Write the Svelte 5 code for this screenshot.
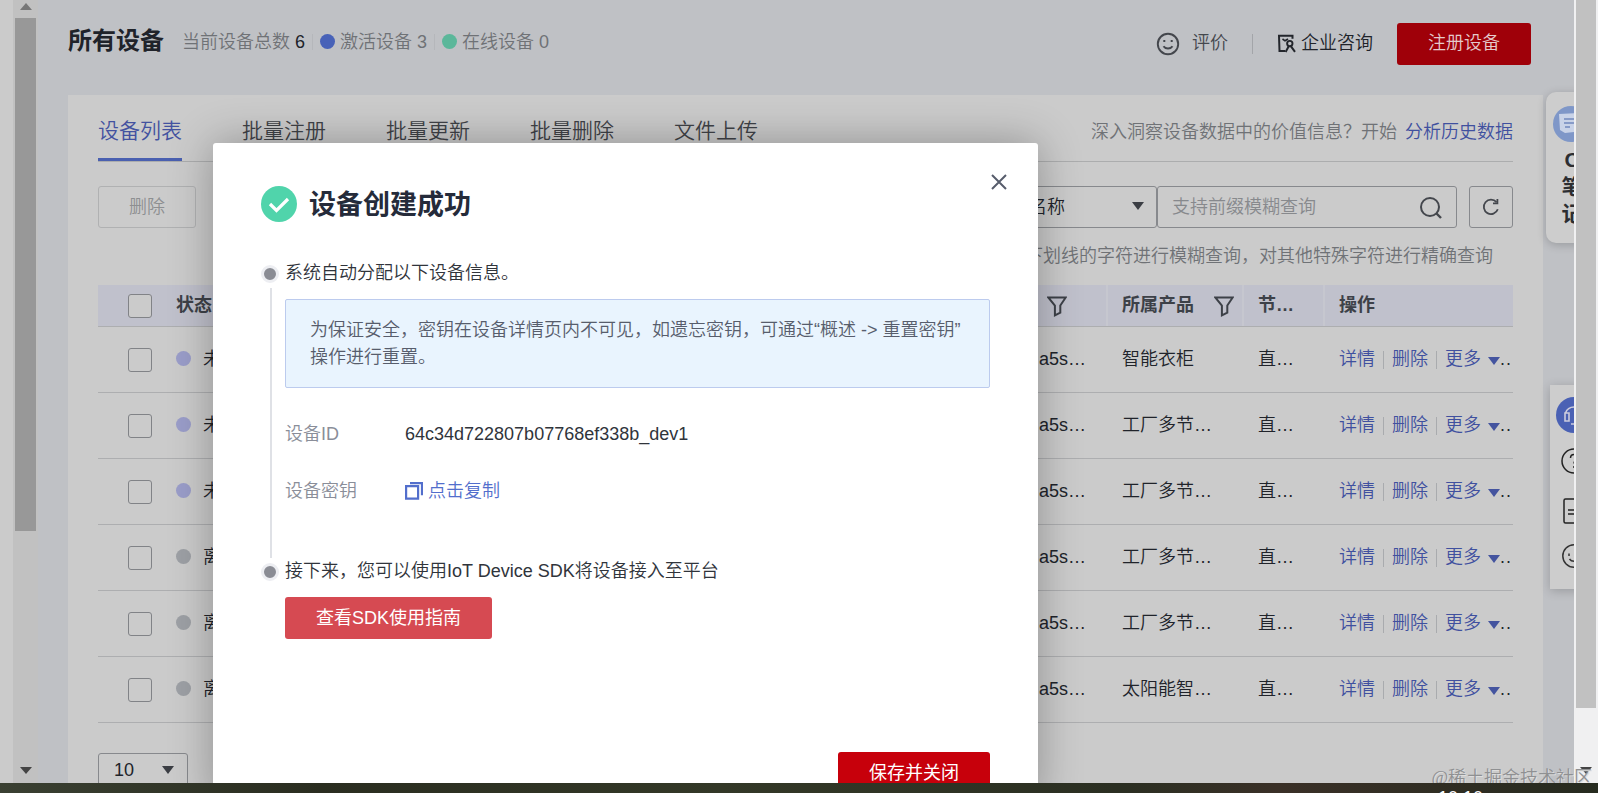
<script lang="ts">
	interface Device {
		status: string;
		tone: 'idle' | 'offline';
		node: string;
		product: string;
		kind: string;
	}

	const tabs = ['设备列表', '批量注册', '批量更新', '批量删除', '文件上传'];

	const devices: Device[] = [
		{ status: '未激活', tone: 'idle', node: 'a5s…', product: '智能衣柜', kind: '直…' },
		{ status: '未激活', tone: 'idle', node: 'a5s…', product: '工厂多节…', kind: '直…' },
		{ status: '未激活', tone: 'idle', node: 'a5s…', product: '工厂多节…', kind: '直…' },
		{ status: '离线', tone: 'offline', node: 'a5s…', product: '工厂多节…', kind: '直…' },
		{ status: '离线', tone: 'offline', node: 'a5s…', product: '工厂多节…', kind: '直…' },
		{ status: '离线', tone: 'offline', node: 'a5s…', product: '太阳能智…', kind: '直…' }
	];

	let activeTab = $state(tabs[0]);
</script>

{#snippet funnel()}
	<svg class="funnel" width="20" height="21" viewBox="0 0 20 21">
		<path d="M1.3 1.5h17.4l-5.4 8v7.2l-5.4 2.6V9.5z" />
	</svg>
{/snippet}

{#snippet caret()}
	<svg class="caret" width="12" height="8" viewBox="0 0 12 8"><path d="M0 0h12L6 8z" /></svg>
{/snippet}

<div class="screen">
	<div class="gutter"></div>
	<div class="scroll-left">
		<svg width="12" height="7" viewBox="0 0 12 7"><path d="M0 7h12L6 0z" fill="#777" /></svg>
		<div class="thumb"></div>
		<svg class="down" width="12" height="7" viewBox="0 0 12 7"><path d="M0 0h12L6 7z" fill="#444" /></svg>
	</div>

	<div class="page">
		<header>
			<h1>所有设备</h1>
			<div class="counts">
				<span>当前设备总数 <b>6</b></span>
				<i class="sep"></i>
				<span class="dot blue"></span>
				<span>激活设备 3</span>
				<i class="sep"></i>
				<span class="dot green"></span>
				<span>在线设备 0</span>
			</div>
			<div class="actions">
				<svg width="24" height="24" viewBox="0 0 24 24" fill="none" stroke="#44474d" stroke-width="1.9">
					<circle cx="12" cy="12" r="10.2" />
					<path d="M7.5 14.2c1.8 3 7.2 3 9 0" />
					<path d="M8.300 8v2M15.700 8v2" stroke-width="2" />
				</svg>
				<span class="rate">评价</span>
				<i class="rule"></i>
				<svg width="19" height="19" viewBox="0 0 19 19" fill="none" stroke="#23262c" stroke-width="2">
					<path d="M8 17H2.500L2 1.800h13.500v3" />
					<path d="M5.500 5l2.500 1.800L11 5" stroke-width="1.600" />
					<circle cx="12.800" cy="9.600" r="2.700" stroke-width="1.900" />
					<path d="M8.600 18l3-5.500M14 12.300l4 5.500" />
				</svg>
				<span class="consult">企业咨询</span>
				<button class="register">注册设备</button>
			</div>
		</header>

		<main>
			<nav>
				{#each tabs as tab}
					<button class="tab" class:active={activeTab === tab} onclick={() => (activeTab = tab)}>{tab}</button>
				{/each}
				<p>深入洞察设备数据中的价值信息？开始<a href="#history">分析历史数据</a></p>
			</nav>

			<div class="toolbar">
				<button class="delete">删除</button>
				<div class="select"><span>设备名称</span>{@render caret()}</div>
				<div class="search">
					<span>支持前缀模糊查询</span>
					<svg width="24" height="24" viewBox="0 0 24 24" fill="none" stroke="#44474d" stroke-width="2">
						<circle cx="11" cy="12" r="9" />
						<path d="M17.5 18.500l4.5 4.5" stroke-width="2.4" />
					</svg>
				</div>
				<button class="refresh" aria-label="刷新">
					<svg width="18" height="18" viewBox="0 0 18 18" fill="none" stroke="#44474d" stroke-width="1.8">
						<path d="M15.800 11.3A7.2 7.2 0 1 1 14.500 4.200" />
						<path d="M15.400 1v4.400h-4.400" />
					</svg>
				</button>
			</div>
			<p class="hint">下划线的字符进行模糊查询，对其他特殊字符进行精确查询</p>

			<div class="row head">
				<span class="box"></span>
				<span class="status">状态</span>
				<span class="node">{@render funnel()}</span>
				<span class="product">所属产品{@render funnel()}</span>
				<span class="kind">节…</span>
				<span class="ops">操作</span>
			</div>
			{#each devices as device}
				<div class="row">
					<span class="box"></span>
					<span class="status"><span class="dot {device.tone}"></span>{device.status}</span>
					<span class="node">{device.node}</span>
					<span class="product">{device.product}</span>
					<span class="kind">{device.kind}</span>
					<span class="ops">
						<a href="#detail">详情</a><i></i><a href="#delete">删除</a><i></i><a href="#more">更多</a>
						{@render caret()}<em>..</em>
					</span>
				</div>
			{/each}

			<div class="pager"><span>10</span>{@render caret()}</div>
		</main>

		<aside class="notes">
			<svg width="36" height="36" viewBox="0 0 36 36">
				<circle cx="18" cy="18" r="18" fill="#7f97c8" />
				<path d="M6 8l20-1 2 18-16 2-5-3z" fill="#c9d3e8" />
				<path d="M11 13h10M11 17h10M12 21h5" stroke="#7189bd" stroke-width="1.6" />
			</svg>
			<span>C</span><span>笔</span><span>记</span>
		</aside>

		<aside class="service">
			<svg width="36" height="36" viewBox="0 0 36 36" fill="none" stroke="#ccd" stroke-width="1.6">
				<circle cx="18" cy="18" r="18" fill="#4a61b4" stroke="none" />
				<path d="M9.500 16a9 9 0 0 1 17 0M9 16h4v8H9zM27 16h-4v8h4M15 27h6" />
			</svg>
			<svg width="26" height="26" viewBox="0 0 26 26" fill="none" stroke="#222" stroke-width="1.5">
				<circle cx="13" cy="13" r="12" />
				<path d="M9.500 10c0-5 7-4.500 7-.5 0 3-3.500 2.500-3.500 6M13 18v2" />
			</svg>
			<svg width="22" height="26" viewBox="0 0 22 26" fill="none" stroke="#222" stroke-width="1.5">
				<rect x="1" y="1" width="20" height="24" rx="1.500" />
				<path d="M5 12h10M5 16h10" />
			</svg>
			<svg width="26" height="24" viewBox="0 0 26 24" fill="none" stroke="#333" stroke-width="1.500">
				<circle cx="13" cy="12" r="11.200" />
				<path d="M8.500 15c2 3 7 3 9 0M8 9.500v2.500M18 9.500v2.500" />
			</svg>
		</aside>
	</div>

	<div class="scroll-right">
		<div class="thumb"></div>
		<svg width="12" height="7" viewBox="0 0 12 7"><path d="M0 0h12L6 7z" fill="#444" /></svg>
	</div>
	<div class="taskbar"><span>10:10</span></div>

	<div class="modal" role="dialog">
		<div class="title">
			<svg width="36" height="36" viewBox="0 0 36 36">
				<circle cx="18" cy="18" r="18" fill="#50d4ab" />
				<path d="M9 18l6.500 6.500L27 13" fill="none" stroke="#fff" stroke-width="3.200" />
			</svg>
			<h2>设备创建成功</h2>
			<svg class="close" width="16" height="16" viewBox="0 0 16 16">
				<path d="M1 1l14 14M15 1L1 15" stroke="#575d6c" stroke-width="2" />
			</svg>
		</div>

		<div class="steps">
			<div class="track">
				<span class="bullet"></span>
				<span class="line"></span>
				<span class="bullet"></span>
			</div>
			<div class="body">
				<p>系统自动分配以下设备信息。</p>
				<div class="tip">为保证安全，密钥在设备详情页内不可见，如遗忘密钥，可通过“概述 -&gt; 重置密钥”<br />操作进行重置。</div>
				<dl>
					<dt>设备ID</dt>
					<dd>64c34d722807b07768ef338b_dev1</dd>
					<dt>设备密钥</dt>
					<dd class="copy">
						<svg width="18" height="18" viewBox="0 0 18 18" fill="none" stroke="#526ecc" stroke-width="2.200">
							<path d="M1.100 4.100h12v12.500h-12z" />
							<path d="M5 1.200h12v12" stroke-width="2.200" />
						</svg>
						点击复制
					</dd>
				</dl>
				<p>接下来，您可以使用IoT Device SDK将设备接入至平台</p>
				<button class="guide">查看SDK使用指南</button>
			</div>
		</div>
		<button class="save">保存并关闭</button>
	</div>

	<div class="watermark">@稀土掘金技术社区</div>
</div>

<style>
	:global(body) {
		margin: 0;
		overflow: hidden;
	}

	.screen {
		position: relative;
		display: grid;
		grid-template: 783px 10px / 13px 25px 1536px 24px;
		width: 1598px;
		height: 793px;
		overflow: hidden;
		background: #cbcbcb;
		color: #20232a;
		font: 18px/27px 'Liberation Sans', 'Noto Sans CJK SC', sans-serif;
		font-weight: 350;
	}

	.screen * {
		box-sizing: border-box;
	}

	h1,
	h2,
	p,
	dl,
	dd {
		margin: 0;
	}

	button {
		padding: 0;
		border: 0;
		background: none;
		font: inherit;
		color: inherit;
	}

	svg {
		flex: none;
		display: block;
	}

	a {
		color: #40509f;
		text-decoration: none;
	}

	.scroll-left {
		display: flex;
		flex-direction: column;
		align-items: center;
		padding: 3px 0 9px;
		background: #c1c1c1;
	}

	.scroll-left .thumb {
		width: 21px;
		height: 513px;
		margin-top: 8px;
		background: #989898;
	}

	.scroll-left .down {
		margin-top: auto;
	}

	.page {
		position: relative;
		overflow: hidden;
		background: #bfc1c5;
	}

	header {
		display: flex;
		align-items: center;
		height: 95px;
		padding: 0 43px 12px 30px;
	}

	h1 {
		margin-top: -2px;
		font-size: 24px;
		font-weight: 700;
	}

	.counts {
		display: flex;
		align-items: center;
		margin: 1px 0 0 18px;
		color: #6f7276;
	}

	.counts b {
		color: #20232a;
		font-weight: 400;
	}

	.sep {
		width: 1px;
		height: 16px;
		margin: 0 7px;
		background: #b5b7bb;
	}

	.dot {
		width: 15px;
		height: 15px;
		border-radius: 50%;
	}

	.counts .dot {
		margin-top: -1px;
		margin-right: 5px;
	}

	.blue {
		background: #4862b8;
	}

	.green {
		background: #5bb79a;
	}

	.idle {
		background: #9a9dc9;
	}

	.offline {
		background: #9da0a5;
	}

	.actions {
		display: flex;
		align-items: center;
		margin-left: auto;
		padding-top: 4px;
	}

	.rate {
		margin-left: 12px;
		color: #44474d;
	}

	.rule {
		width: 1px;
		height: 20px;
		margin: 0 24px;
		background: #a3a5a9;
	}

	.consult {
		margin-left: 5px;
	}

	.register {
		width: 134px;
		height: 42px;
		margin-left: 24px;
		border-radius: 3px;
		background: #9f0009;
		color: #e5c9cb;
	}

	main {
		width: 1475px;
		height: 700px;
		margin-left: 30px;
		padding: 0 30px;
		background: #cbcbcb;
	}

	nav {
		display: flex;
		align-items: stretch;
		gap: 60px;
		height: 67px;
		border-bottom: 1px solid #acadae;
	}

	.tab {
		height: 66px;
		padding-top: 8px;
		border-bottom: 3px solid transparent;
		font-size: 21px;
		color: #3f4247;
	}

	.tab.active {
		border-color: #4a60b0;
		color: #4352a0;
	}

	nav p {
		margin-left: auto;
		padding-top: 24px;
		color: #6f7276;
	}

	nav a {
		margin-left: 8px;
	}

	.toolbar {
		display: flex;
		height: 42px;
		margin-top: 24px;
	}

	.delete {
		width: 98px;
		border: 1px solid #b0b1b2;
		border-radius: 3px;
		color: #8d8f91;
	}

	.select,
	.search,
	.refresh,
	.pager {
		display: flex;
		align-items: center;
		justify-content: space-between;
		border: 1px solid #87898d;
		border-radius: 3px;
	}

	.select {
		width: 180px;
		margin-left: auto;
		padding: 0 12px 0 14px;
	}

	.select .caret {
		margin-top: -2px;
	}

	.select span {
		margin-left: 1px;
	}

	.caret {
		fill: #3b3e44;
	}

	.search {
		width: 300px;
		padding: 0 13px 0 14px;
		color: #87898d;
	}

	.refresh {
		justify-content: center;
		width: 44px;
		margin-left: 12px;
	}

	.hint {
		margin: 15px 20px 15px 0;
		text-align: right;
		color: #6f7276;
	}

	/* device table */
	.row {
		display: grid;
		grid-template-columns: 24px 24px 863px 84px 135px 81px 173px;
		align-items: center;
		height: 66px;
		padding-left: 30px;
		border-bottom: 1px solid #adaeb0;
	}

	.row .box {
		width: 24px;
		height: 24px;
		margin-top: 1px;
		border: 1px solid #818387;
		border-radius: 3px;
	}

	.row:not(.head) .product {
		margin-left: -1px;
	}

	.status {
		grid-column: 3;
		display: flex;
		align-items: center;
		gap: 12px;
	}

	.status .dot {
		margin-top: -3px;
	}

	.ops {
		display: flex;
		align-items: center;
	}

	.ops i {
		width: 1px;
		height: 18px;
		margin: 0 8px;
		background: #a9abae;
	}

	.ops .caret {
		margin: 3px 0 0 7px;
		fill: #44549f;
	}

	.ops em {
		font-style: normal;
		letter-spacing: 1px;
	}

	.head {
		height: 42px;
		background: #c0c1cc;
		color: #3d4148;
		font-weight: 700;
	}

	.head .box {
		margin-top: 0;
		background: #cbcbcb;
	}

	.head .node,
	.head .product {
		display: flex;
		align-items: center;
	}

	.head .node {
		padding: 2px 0 0 8px;
	}

	.head .product .funnel {
		margin: 2px 0 0 20px;
	}

	.head .product,
	.head .kind,
	.head .ops {
		height: 41px;
		margin-left: -16px;
		padding-left: 16px;
		line-height: 41px;
		box-shadow: inset 2px 0 #c6c7cf;
	}

	.head .product {
		margin-left: -17px;
	}

	.funnel {
		fill: none;
		stroke: #3d4148;
		stroke-width: 2;
	}

	.pager {
		width: 90px;
		height: 42px;
		margin-top: 30px;
		padding: 0 13px 8px 15px;
	}

	/* floating widgets cut off by the page's right edge */
	aside {
		position: absolute;
		background: #cdcdcd;
		box-shadow: 0 2px 10px rgba(0, 0, 0, 0.2);
	}

	.notes {
		left: 1508px;
		top: 92px;
		display: flex;
		flex-direction: column;
		align-items: center;
		width: 52px;
		height: 151px;
		padding-top: 14px;
		border-radius: 10px;
		color: #2c2e32;
		font-size: 21px;
		font-weight: 700;
	}

	.notes svg {
		margin: 0 2px 4px 0;
	}

	.service {
		left: 1512px;
		top: 385px;
		display: flex;
		flex-direction: column;
		align-items: center;
		width: 48px;
		height: 204px;
		padding-top: 12px;
	}

	.service svg + svg {
		margin-top: 15px;
	}

	.service svg:nth-child(3) {
		margin-top: 24px;
	}

	.service svg:nth-child(4) {
		margin-top: 20px;
	}

	.scroll-right {
		display: flex;
		flex-direction: column;
		justify-content: space-between;
		padding: 0 2px 9px;
		background: #f0f0f1;
	}

	.scroll-right .thumb {
		width: 20px;
		height: 708px;
		background: #c1c1c1;
	}

	.scroll-right svg {
		align-self: center;
	}

	.taskbar {
		grid-column: 1 / -1;
		z-index: 2;
		overflow: hidden;
		padding: 5px 0 0 1438px;
		background: linear-gradient(90deg, #3a4032, #2a2d20 20%, #333827 45%, #2b2f22 70%, #3a3027 80%, #262b1f);
		color: #fff;
		line-height: 20px;
	}

	.modal {
		position: absolute;
		left: 213px;
		top: 143px;
		display: flex;
		flex-direction: column;
		width: 825px;
		height: 660px;
		padding: 0 48px;
		border-radius: 3px;
		background: #fff;
		box-shadow: 0 0 44px rgba(0, 0, 0, 0.3);
		color: #30343b;
	}

	.title {
		display: flex;
		align-items: center;
		margin-top: 41px;
		height: 40px;
	}

	h2 {
		margin: 1px 0 0 12px;
		font-size: 27px;
		line-height: 40px;
		color: #252b3a;
	}

	.close {
		margin: -44px -17px 0 auto;
	}

	.steps {
		display: flex;
		margin-top: 36px;
	}

	.track {
		display: flex;
		flex-direction: column;
		align-items: center;
		width: 18px;
		padding-top: 5px;
	}

	.bullet {
		width: 18px;
		height: 18px;
		border: 3px solid #edeef2;
		border-radius: 50%;
		background: #8a8c94;
	}

	.line {
		width: 2px;
		height: 270px;
		margin: 5px 0 5px 2px;
		background: #dfe1e6;
	}

	.body {
		flex: 1;
		margin-left: 6px;
	}

	.tip {
		height: 89px;
		margin-top: 12px;
		padding: 17px 24px;
		border: 1px solid #bccbee;
		border-radius: 2px;
		background: #e9f4fe;
		color: #575d6c;
		white-space: nowrap;
	}

	dl {
		display: grid;
		grid-template-columns: 120px auto;
		row-gap: 30px;
		margin: 33px 0 53px;
	}

	dt {
		color: #8a8e99;
	}

	.copy {
		display: flex;
		align-items: center;
		gap: 5px;
		color: #526ecc;
	}

	.copy svg {
		margin-top: -2px;
	}

	.guide {
		width: 207px;
		height: 42px;
		margin-top: 12px;
		border-radius: 3px;
		background: #d64a52;
		color: #fff;
		font-weight: 400;
	}

	.save {
		align-self: flex-end;
		width: 152px;
		height: 42px;
		margin-top: auto;
		margin-bottom: 9px;
		border-radius: 3px;
		background: #c7000b;
		color: #fff;
		font-weight: 400;
	}

	.watermark {
		position: absolute;
		right: 6px;
		top: 765px;
		height: 18px;
		overflow: hidden;
		font-family: 'Liberation Serif', 'Noto Sans CJK SC', serif;
		color: #8f9092;
		text-shadow: 1px 1px #dedede;
		z-index: 3;
	}
</style>
